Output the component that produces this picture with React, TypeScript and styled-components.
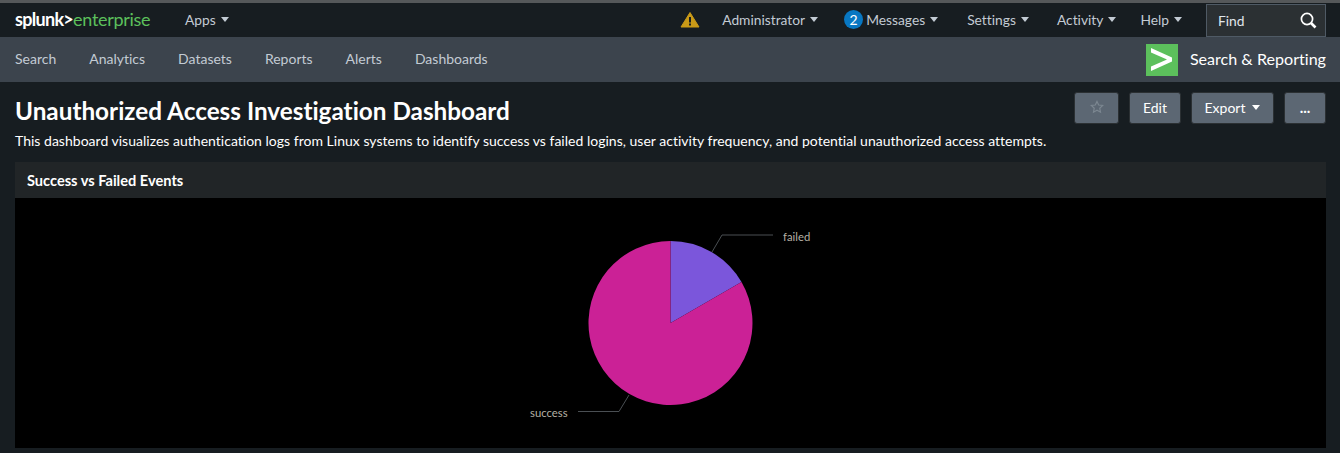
import React from 'react';
import styled, { createGlobalStyle } from 'styled-components';

const GlobalStyle = createGlobalStyle`
  html, body {
    margin: 0;
    padding: 0;
    background: #171d21;
    font-family: Lato, "Open Sans", Arial, sans-serif;
    font-variant-ligatures: none;
    overflow: hidden;
  }
  * { box-sizing: border-box; }
`;

const Page = styled.div`
  width: 1340px;
  height: 453px;
  background: #171d21;
  overflow: hidden;
`;

const TopBar = styled.header`
  height: 37px;
  background: #171d21;
  border-top: 3px solid #55585a;
  display: flex;
  align-items: center;
  padding: 0 14px 2px 15px;
`;

const Logo = styled.div`
  font-size: 18px;
  line-height: 1;
  letter-spacing: -0.3px;
  width: 170px;
  color: #5cc05c;
  span { color: #fff; font-weight: 700; letter-spacing: -0.7px; }
`;

const MenuItem = styled.div<{ $gap?: number }>`
  color: #c3cbd4;
  font-size: 13.8px;
  display: flex;
  align-items: center;
  gap: 5px;
  margin-right: ${p => p.$gap ?? 0}px;
`;

const Caret = styled.i<{ $color?: string }>`
  display: inline-block;
  width: 0;
  height: 0;
  border-left: 4px solid transparent;
  border-right: 4px solid transparent;
  border-top: 5px solid ${p => p.$color ?? '#c3cbd4'};
`;

const Spacer = styled.div`
  flex: 1;
`;

const WarningIcon = styled.svg`
  margin-right: 22px;
`;

const Badge = styled.span`
  width: 19px;
  height: 19px;
  border-radius: 50%;
  background: #0877c2;
  color: #fff;
  font-size: 14px;
  display: flex;
  align-items: center;
  justify-content: center;
  margin-right: -2px;
`;

const FindBox = styled.div`
  width: 120px;
  height: 33px;
  margin-bottom: -2px;
  border: 1px solid #4f5a65;
  background: #2b3033;
  color: #e1e6eb;
  font-size: 13.8px;
  display: flex;
  align-items: center;
  justify-content: space-between;
  padding: 0 8px 0 11px;
`;

const AppBar = styled.nav`
  height: 45px;
  background: #3c444d;
  display: flex;
  align-items: center;
  padding: 0 14px 2px 15px;
  gap: 33px;
`;

const AppLink = styled.a`
  color: #c3cbd4;
  font-size: 14px;
`;

const AppTitle = styled.div`
  display: flex;
  align-items: center;
  gap: 12px;
  color: #fff;
  font-size: 16.1px;
`;

const AppIcon = styled.svg`
  display: block;
  margin-top: 2px;
`;

const Content = styled.main`
  padding: 0 14px 0 15px;
`;

const TitleRow = styled.div`
  height: 50px;
  display: flex;
  align-items: flex-start;
  justify-content: space-between;
`;

const Title = styled.h1`
  margin: 14px 0 0;
  color: #fff;
  font-size: 24.3px;
  line-height: 30px;
  font-weight: 700;
`;

const Actions = styled.div`
  display: flex;
  gap: 10px;
  padding-top: 10px;
`;

const ActionButton = styled.button<{ $width: number; $dim?: boolean }>`
  width: ${p => p.$width}px;
  height: 32px;
  border: 1px solid #2b3033;
  border-radius: 3px;
  background: #5c6773;
  color: ${p => (p.$dim ? '#7c8791' : '#fff')};
  font-family: inherit;
  font-size: 14px;
  display: flex;
  align-items: center;
  justify-content: center;
  gap: 7px;
  padding: 0 0 2px;
`;

const MoreDots = styled.span`
  font-weight: 700;
  font-size: 15px;
`;

const Description = styled.p`
  margin: 0;
  height: 30px;
  color: #fff;
  font-size: 14px;
  letter-spacing: 0.015px;
  line-height: 18px;
`;

const PanelHeader = styled.div`
  height: 36px;
  background: #212527;
  color: #fff;
  font-size: 14.6px;
  font-weight: 700;
  display: flex;
  align-items: center;
  padding-left: 12px;
`;

const ChartArea = styled.div`
  height: 250px;
  background: #000;
`;

const ChartSvg = styled.svg`
  display: block;
  width: 100%;
  height: 100%;
  font-family: Lato, Arial, sans-serif;
  font-size: 11.3px;
`;

const MENU = [
  { label: 'Administrator', gap: 26 },
  { label: 'Messages', gap: 29, badge: 2 },
  { label: 'Settings', gap: 28 },
  { label: 'Activity', gap: 24 },
  { label: 'Help', gap: 24 },
];

const LINKS = ['Search', 'Analytics', 'Datasets', 'Reports', 'Alerts', 'Dashboards'];

const PieChart = () => (
  <ChartSvg viewBox="0 0 1311 250">
    <path d="M655.5 125 L655.5 43 A82 82 0 0 1 726.5 84 Z" fill="#7b56db" />
    <path d="M655.5 125 L726.5 84 A82 82 0 1 1 655.5 43 Z" fill="#cb2196" />
    <path d="M697 54 L707 37 H758" fill="none" stroke="#4a4f53" />
    <path d="M614 197 L604 213.5 H563" fill="none" stroke="#4a4f53" />
    <text x="768" y="42.5" fill="#b5b0a4">failed</text>
    <text x="515" y="219" fill="#b5b0a4">success</text>
  </ChartSvg>
);

const App = () => (
  <Page>
    <GlobalStyle />
    <TopBar>
      <Logo>
        <span>splunk&gt;</span>enterprise
      </Logo>
      <MenuItem>
        Apps <Caret />
      </MenuItem>
      <Spacer />
      <WarningIcon width="20" height="17" viewBox="0 0 20 17">
        <path d="M10 1.5 L19 16 H1 Z" fill="#c99a17" stroke="#c99a17" strokeLinejoin="round" />
        <rect x="9" y="6" width="2" height="5.5" fill="#171d21" />
        <rect x="9" y="12.5" width="2" height="2" fill="#171d21" />
      </WarningIcon>
      {MENU.map(item => (
        <MenuItem key={item.label} $gap={item.gap}>
          {item.badge ? <Badge>{item.badge}</Badge> : null}
          {item.label} <Caret />
        </MenuItem>
      ))}
      <FindBox>
        Find
        <svg width="17" height="17" viewBox="0 0 17 17" fill="none" stroke="#fff">
          <circle cx="7" cy="7" r="5.6" strokeWidth="1.7" />
          <path d="M11 11 L15.5 15.5" strokeWidth="2.6" />
        </svg>
      </FindBox>
    </TopBar>
    <AppBar>
      {LINKS.map(link => (
        <AppLink key={link}>{link}</AppLink>
      ))}
      <Spacer />
      <AppTitle>
        <AppIcon width="32" height="32" viewBox="0 0 32 32">
          <rect width="32" height="32" fill="#5cc05c" />
          <path d="M5 4 L26 13.5 V17.5 L5 27 V22.5 L21 15.5 L5 8.5 Z" fill="#fff" />
        </AppIcon>
        Search &amp; Reporting
      </AppTitle>
    </AppBar>
    <Content>
      <TitleRow>
        <Title>Unauthorized Access Investigation Dashboard</Title>
        <Actions>
          <ActionButton $width={45} $dim>
            <svg width="14" height="14" viewBox="0 0 24 24" fill="none" stroke="#7c8791" strokeWidth="2">
              <path d="M12 2.5l2.9 6.2 6.8.8-5 4.6 1.3 6.7-6-3.4-6 3.4 1.3-6.7-5-4.6 6.8-.8z" />
            </svg>
          </ActionButton>
          <ActionButton $width={52}>Edit</ActionButton>
          <ActionButton $width={83}>
            Export <Caret $color="#fff" />
          </ActionButton>
          <ActionButton $width={42}>
            <MoreDots>...</MoreDots>
          </ActionButton>
        </Actions>
      </TitleRow>
      <Description>
        This dashboard visualizes authentication logs from Linux systems to identify success vs failed logins, user activity frequency, and potential unauthorized access attempts.
      </Description>
      <PanelHeader>Success vs Failed Events</PanelHeader>
      <ChartArea>
        <PieChart />
      </ChartArea>
    </Content>
  </Page>
);

export default App;
